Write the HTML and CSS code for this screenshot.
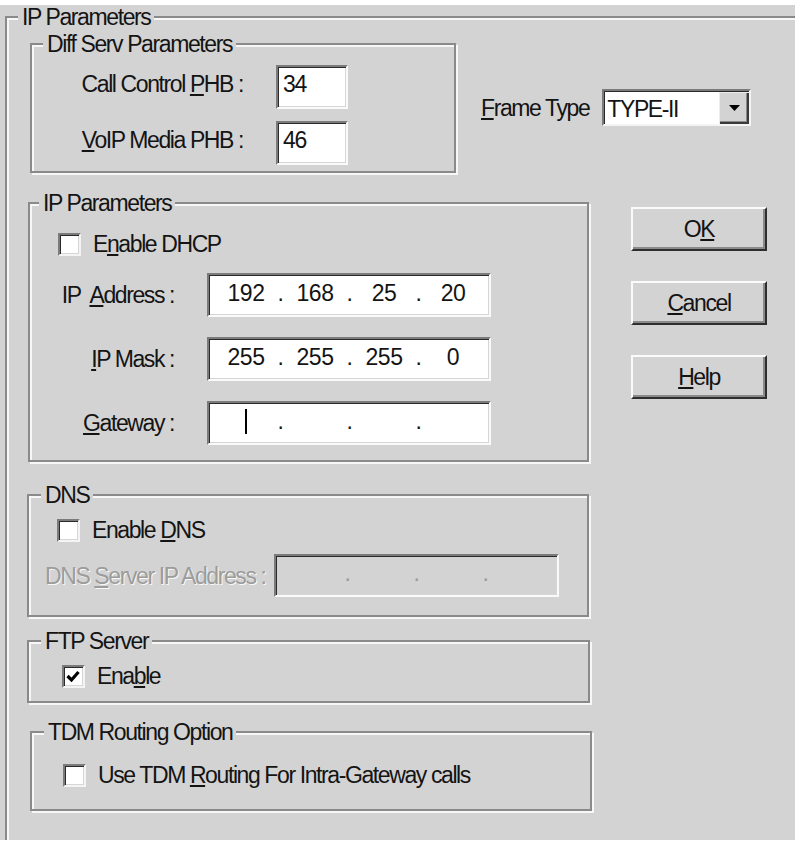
FILE: index.html
```html
<!DOCTYPE html>
<html>
<head>
<meta charset="utf-8">
<title>IP Parameters</title>
<link rel="stylesheet" href="styles.css">
</head>
<body>
<div class="dialog">
  <fieldset class="group outer">
    <legend>IP Parameters</legend>
    <div class="top-row">
      <fieldset class="group diffserv">
        <legend>Diff Serv Parameters</legend>
        <div class="phb-grid">
          <label class="lbl">Call Control <u>P</u>HB :</label>
          <div class="edit small">34</div>
          <label class="lbl"><u>V</u>oIP Media PHB :</label>
          <div class="edit small">46</div>
        </div>
      </fieldset>
      <div class="frame-type">
        <span class="frame-label"><u>F</u>rame Type</span>
        <div class="combo">
          <span class="combo-text">TYPE-II</span>
          <span class="combo-btn"><svg width="11" height="6" viewBox="0 0 11 6"><path d="M0 0H11L5.5 6Z" fill="#000"/></svg></span>
        </div>
      </div>
    </div>

    <div class="main-row">
      <div class="left-col">
        <fieldset class="group ipgroup">
          <legend>IP Parameters</legend>
          <div class="check-row dhcp">
            <span class="checkbox"></span>
            <span>E<u>n</u>able DHCP</span>
          </div>
          <div class="ip-grid">
            <label class="ip-lbl">IP&nbsp; <u>A</u>ddress :</label>
            <div class="edit ip">
              <span class="seg">192</span><span class="dot">.</span><span class="seg">168</span><span class="dot">.</span><span class="seg">25</span><span class="dot">.</span><span class="seg">20</span>
            </div>
            <label class="ip-lbl"><u>I</u>P Mask :</label>
            <div class="edit ip">
              <span class="seg">255</span><span class="dot">.</span><span class="seg">255</span><span class="dot">.</span><span class="seg">255</span><span class="dot">.</span><span class="seg">0</span>
            </div>
            <label class="ip-lbl"><u>G</u>ateway :</label>
            <div class="edit ip">
              <span class="seg"><span class="caret"></span></span><span class="dot">.</span><span class="seg"></span><span class="dot">.</span><span class="seg"></span><span class="dot">.</span><span class="seg"></span>
            </div>
          </div>
        </fieldset>

        <fieldset class="group dnsgroup">
          <legend>DNS</legend>
          <div class="check-row dns">
            <span class="checkbox"></span>
            <span>Enable <u>D</u>NS</span>
          </div>
          <div class="dns-row">
            <label class="disabled-lbl">DNS <u>S</u>erver IP Address :</label>
            <div class="edit ip disabled">
              <span class="seg"></span><span class="dot">.</span><span class="seg"></span><span class="dot">.</span><span class="seg"></span><span class="dot">.</span><span class="seg"></span>
            </div>
          </div>
        </fieldset>

        <fieldset class="group ftpgroup">
          <legend>FTP Server</legend>
          <div class="check-row ftp">
            <span class="checkbox"><svg width="19" height="19" viewBox="0 0 19 19"><polyline points="3.5,9 7.5,13 14.5,5" fill="none" stroke="#000" stroke-width="3.2"/></svg></span>
            <span>Ena<u>b</u>le</span>
          </div>
        </fieldset>

        <fieldset class="group tdmgroup">
          <legend>TDM Routing Option</legend>
          <div class="check-row tdm">
            <span class="checkbox"></span>
            <span>Use TDM <u>R</u>outing For Intra-Gateway calls</span>
          </div>
        </fieldset>
      </div>

      <div class="buttons">
        <div class="btn">O<u>K</u></div>
        <div class="btn"><u>C</u>ancel</div>
        <div class="btn"><u>H</u>elp</div>
      </div>
    </div>
  </fieldset>
</div>
</body>
</html>
```

FILE: styles.css
```css
html, body {
  margin: 0;
  padding: 0;
  background: #ffffff;
}

.dialog {
  margin-top: 5px;
  height: 835px;
  overflow: hidden;
  background: #d3d3d3;
  font-family: "Liberation Sans", Arial, sans-serif;
  font-size: 23px;
  letter-spacing: -1.4px;
  line-height: 24px;
  color: #141414;
}

u {
  text-decoration-thickness: 2px;
  text-underline-offset: 2px;
}

/* ---------- group boxes (etched) ---------- */
.group {
  box-sizing: border-box;
  margin: 0;
  padding: 0;
  min-width: 0;
  border: 2px solid #8a8a8a;
  box-shadow: inset 2px 2px 0 #f7f7f7, 2px 2px 0 #f7f7f7;
}

.group > legend {
  float: none;
  padding: 0 4px;
  margin-left: 11px;
  background: #d3d3d3;
  font-size: 23px;
  line-height: 24px;
  white-space: nowrap;
}

.outer {
  margin-left: 5px;
  width: 830px;
  padding-bottom: 80px;
}

/* ---------- top row ---------- */
.top-row {
  display: flex;
  align-items: flex-start;
}

.diffserv {
  width: 426px;
  margin: 3px 0 0 23px;
  padding-bottom: 6px;
}

.phb-grid {
  display: grid;
  grid-template-columns: 211px 72px;
  grid-auto-rows: 44px;
  column-gap: 33px;
  row-gap: 12px;
  margin-top: 9px;
}

.lbl {
  align-self: center;
  text-align: right;
  white-space: nowrap;
  padding-bottom: 6px;
}

.frame-type {
  display: flex;
  align-items: center;
  gap: 13px;
  margin: 60px 0 0 25px;
}

.frame-label {
  white-space: nowrap;
}

.combo {
  box-sizing: border-box;
  display: flex;
  width: 149px;
  height: 37px;
  background: #fff;
  border: 2px solid;
  border-color: #7b7b7b #f4f4f4 #f4f4f4 #7b7b7b;
  box-shadow: inset 1px 1px 0 #2a2a2a;
}

.combo-text {
  flex: 1;
  padding: 6px 0 0 3px;
  line-height: 24px;
}

.combo-btn {
  box-sizing: border-box;
  width: 30px;
  margin: 1px 0 0 0;
  display: flex;
  align-items: center;
  justify-content: center;
  background: #d3d3d3;
  box-shadow: inset 1px 1px 0 #ececec, inset -2px -2px 0 #3a3a3a, inset -3px -3px 0 #8a8a8a;
}

/* ---------- edits ---------- */
.edit {
  box-sizing: border-box;
  background: #fff;
  border: 2px solid;
  border-color: #7b7b7b #fafafa #fafafa #7b7b7b;
  box-shadow: inset 1px 1px 0 #2a2a2a, inset -1px -1px 0 #d6d6d6;
}

.edit.small {
  padding: 5px 0 0 5px;
}

.edit.ip {
  display: grid;
  grid-template-columns: 52px 17px 52px 17px 52px 17px 52px;
  align-items: center;
  padding: 0 0 5px 11px;
}

.edit.disabled {
  background: #d3d3d3;
  color: #9a9a9a;
}

.seg, .dot {
  text-align: center;
  letter-spacing: -0.5px;
}

.caret {
  display: inline-block;
  width: 2px;
  height: 25px;
  background: #000;
  vertical-align: middle;
}

/* ---------- checkbox rows ---------- */
.check-row {
  display: flex;
  align-items: center;
  gap: 12px;
  white-space: nowrap;
}

.checkbox {
  box-sizing: border-box;
  width: 23px;
  height: 23px;
  flex: none;
  display: flex;
  align-items: center;
  justify-content: center;
  background: #fff;
  border: 2px solid;
  border-color: #7b7b7b #f4f4f4 #f4f4f4 #7b7b7b;
  box-shadow: inset 1px 1px 0 #2a2a2a, inset -1px -1px 0 #d6d6d6;
}

/* ---------- main row ---------- */
.main-row {
  display: flex;
  align-items: flex-start;
  margin-top: 18px;
}

.left-col {
  width: 585px;
  display: flex;
  flex-direction: column;
  align-items: flex-start;
}

.ipgroup {
  width: 561px;
  margin-left: 21px;
  padding-bottom: 15px;
}

.ipgroup > legend {
  margin-left: 9px;
}

.check-row.dhcp {
  margin: 17px 0 0 28px;
}

.ip-grid {
  display: grid;
  grid-template-columns: 144px 284px;
  grid-auto-rows: 44px;
  column-gap: 33px;
  row-gap: 20px;
  margin-top: 17px;
}

.ip-lbl {
  align-self: center;
  text-align: right;
  white-space: nowrap;
}

.dnsgroup {
  width: 562px;
  margin: 21px 0 0 20px;
  padding-bottom: 18px;
}

.dnsgroup > legend,
.ftpgroup > legend,
.tdmgroup > legend {
  margin-left: 12px;
}

.check-row.dns {
  margin: 11px 0 0 28px;
}

.dns-row {
  display: flex;
  align-items: center;
  margin: 12px 0 0 16px;
}

.disabled-lbl {
  width: 229px;
  flex: none;
  white-space: nowrap;
  color: #9c9c9c;
  text-shadow: 1px 1px 0 #f8f8f8;
}

.dns-row .edit {
  width: 285px;
  height: 43px;
}

.ftpgroup {
  width: 563px;
  margin: 12px 0 0 20px;
  padding-bottom: 13px;
}

.check-row.ftp {
  margin: 11px 0 0 33px;
}

.tdmgroup {
  width: 562px;
  margin: 17px 0 0 23px;
  padding-bottom: 22px;
}

.check-row.tdm {
  margin: 19px 0 0 31px;
}

/* ---------- buttons ---------- */
.buttons {
  display: flex;
  flex-direction: column;
  gap: 30px;
  margin: 16px 0 0 39px;
}

.btn {
  box-sizing: border-box;
  width: 136px;
  height: 44px;
  display: flex;
  align-items: center;
  justify-content: center;
  background: #d3d3d3;
  border: 2px solid;
  border-color: #fbfbfb #2e2e2e #2e2e2e #fbfbfb;
  box-shadow: inset -2px -2px 0 #8a8a8a;
}
```
